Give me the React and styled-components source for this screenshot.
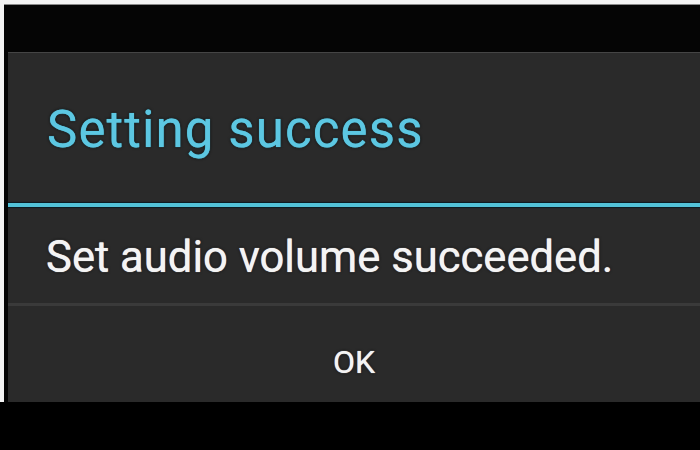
import React from "react";
import styled, { createGlobalStyle } from "styled-components";

const Global = createGlobalStyle`
  html, body {
    margin: 0;
    padding: 0;
    background: #000;
    width: 700px;
    height: 450px;
    overflow: hidden;
    font-family: Roboto, "Noto Sans", "DejaVu Sans", sans-serif;
  }
`;

const Page = styled.div`
  width: 700px;
  height: 450px;
  background: #000;
  display: flex;
  flex-direction: column;
`;

const Frame = styled.div`
  height: 402px;
  box-sizing: border-box;
  border-top: 4px solid #f4f4f4;
  border-left: 4px solid #f4f4f4;
  box-shadow: inset 0 1px 0 #8a8a8a;
  background: #050505;
  padding: 48px 0 0 4px;
  display: flex;
  flex-direction: column;
`;

const Dialog = styled.div`
  flex: 1;
  background: #2a2a2a;
  border-top: 1px solid #454545;
  display: flex;
  flex-direction: column;
`;

const TitleBar = styled.div`
  height: 150px;
  display: flex;
  align-items: center;
  padding-left: 39px;
  box-sizing: border-box;
`;

const Title = styled.h1`
  margin: 0;
  font-family: Roboto, "Noto Sans", sans-serif;
  font-weight: 400;
  font-size: 51px;
  letter-spacing: 1.1px;
  color: #5cc7e2;
  text-shadow: 0 0 1px #5cc7e2, 0 0 3px #000;
  padding-top: 2px;
`;

const Accent = styled.div`
  height: 4px;
  background: #52c2d8;
  box-shadow: 0 1px 1px #0a1a22, 0 -1px 1px #0a1a22;
`;

const Message = styled.div`
  height: 96px;
  display: flex;
  align-items: center;
  padding-left: 38px;
  box-sizing: border-box;
  font-size: 43.6px;
  color: #f4f4f4;
  text-shadow: 0 0 1px #f4f4f4, 0 0 3px #000;
  padding-top: 5px;
`;

const Separator = styled.div`
  height: 3px;
  background: #3a3a3a;
`;

const Button = styled.button`
  flex: 1;
  border: none;
  background: transparent;
  color: #f4f4f4;
  font-family: Roboto, "Noto Sans", sans-serif;
  font-size: 32px;
  text-shadow: 0 0 1px #f4f4f4, 0 0 3px #000;
  padding: 16px 0 0 0;
  display: flex;
  align-items: center;
  justify-content: center;
  cursor: pointer;
`;

export default function App() {
  return (
    <Page>
      <Global />
      <Frame>
        <Dialog>
          <TitleBar>
            <Title>Setting success</Title>
          </TitleBar>
          <Accent />
          <Message>Set audio volume succeeded.</Message>
          <Separator />
          <Button>OK</Button>
        </Dialog>
      </Frame>
    </Page>
  );
}
